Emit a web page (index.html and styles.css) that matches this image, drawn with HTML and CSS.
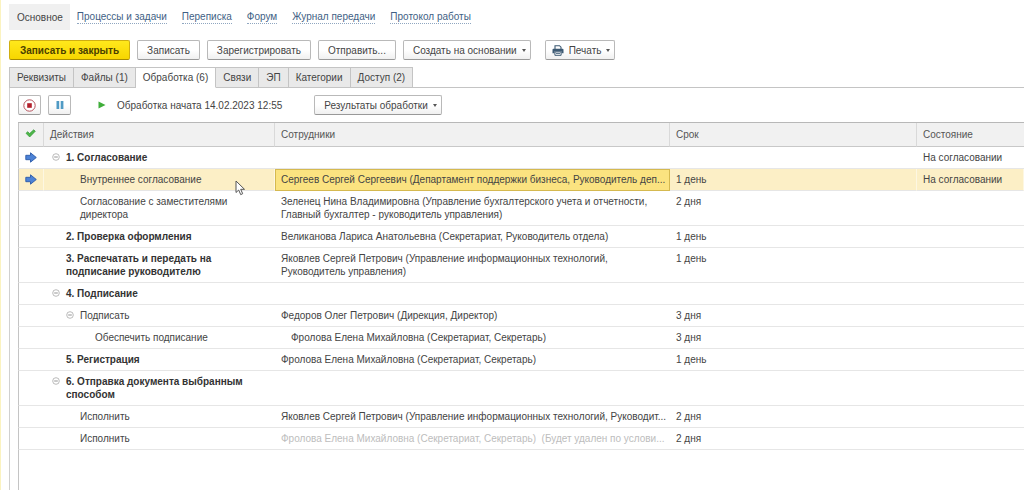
FILE: index.html
```
<!DOCTYPE html>
<html lang="ru">
<head>
<meta charset="utf-8">
<title>Обработка документа</title>
<link rel="stylesheet" href="styles.css">
</head>
<body>
<svg class="defs" aria-hidden="true">
  <symbol id="arrow" viewBox="0 0 12 11"><path d="M.8 3.3h4.700V.8L11.300 5.500 5.500 10.200V7.700H.8z" fill="#4c82d6" stroke="#2b5aa8" stroke-width=".9" stroke-linejoin="round"/></symbol>
  <symbol id="minus" viewBox="0 0 8 8"><circle cx="4" cy="4" r="3.300" fill="#fff" stroke="#aaa" stroke-width=".8"/><path d="M2.200 4h3.600" stroke="#888" stroke-width=".9"/></symbol>
</svg>
<main class="page">
  <nav class="nav">
    <span class="nav-current">Основное</span>
    <a href="#">Процессы и задачи</a>
    <a href="#">Переписка</a>
    <a href="#">Форум</a>
    <a href="#">Журнал передачи</a>
    <a href="#">Протокол работы</a>
  </nav>
  <div class="commands">
    <button class="btn btn-primary">Записать и закрыть</button>
    <button class="btn">Записать</button>
    <button class="btn">Зарегистрировать</button>
    <button class="btn">Отправить...</button>
    <button class="btn btn-menu">Создать на основании<span class="caret"></span></button>
    <button class="btn btn-print"><svg width="12" height="11" viewBox="0 0 12 11"><path d="M3 4V.7h4.500L9 2.200V4" fill="#fff" stroke="#3d5a73" stroke-width="1.100"/><path d="M1.500 3.700h9q1 0 1 1v3.600h-2V6.600h-7v1.700h-2V4.700q0-1 1-1z" fill="#3d5a73"/><path d="M2.900 6.900h6.200v3.400H2.900z" fill="#fff" stroke="#3d5a73"/><path d="M4 8.500h4" stroke="#3d5a73" stroke-width=".8"/></svg>Печать<span class="caret"></span></button>
  </div>
  <div class="tabs" role="tablist">
    <button class="tab" role="tab">Реквизиты</button>
    <button class="tab" role="tab">Файлы (1)</button>
    <button class="tab tab-active" role="tab" aria-selected="true">Обработка (6)</button>
    <button class="tab" role="tab">Связи</button>
    <button class="tab" role="tab">ЭП</button>
    <button class="tab" role="tab">Категории</button>
    <button class="tab" role="tab">Доступ (2)</button>
  </div>
  <section class="panel">
    <div class="toolbar">
      <button class="btn btn-icon" aria-label="Остановить"><svg width="13" height="13" viewBox="0 0 13 13"><circle cx="6.500" cy="6.500" r="5.700" fill="#fff" stroke="#b5525c" stroke-width="1"/><path d="M4.200 4.200h4.600v4.600H4.200z" fill="#b3202c"/></svg></button>
      <button class="btn btn-icon" aria-label="Приостановить"><svg width="8" height="8" viewBox="0 0 8 8"><path d="M.5 0h2.700v8H.5zM4.700 0h2.700v8H4.700z" fill="#4f9ac4"/></svg></button>
      <span class="status"><svg width="8" height="8" viewBox="0 0 8 8"><path d="M.5.5 7.500 4l-7 3.500z" fill="#3fae3a"/></svg>Обработка начата 14.02.2023 12:55</span>
      <button class="btn btn-menu">Результаты обработки<span class="caret"></span></button>
    </div>
    <table class="grid">
      <colgroup><col class="c-mark"><col class="c-action"><col class="c-staff"><col class="c-term"><col></colgroup>
      <thead>
        <tr><th class="mark"><svg width="11" height="9" viewBox="0 0 11 9"><path d="M1 4.300 2.800 2.700 4.600 4.600 8.700.8 10.300 2.200 4.700 8z" fill="#4fb748" stroke="#2f9638" stroke-width=".7" stroke-linejoin="round"/></svg></th><th>Действия</th><th>Сотрудники</th><th>Срок</th><th>Состояние</th></tr>
      </thead>
      <tbody>
        <tr><td class="mark"><svg width="12" height="11"><use href="#arrow"/></svg></td><td class="group"><svg class="fold" width="8" height="8"><use href="#minus"/></svg>1. Согласование</td><td></td><td></td><td>На согласовании</td></tr>
        <tr class="selected"><td class="mark"><svg width="12" height="11"><use href="#arrow"/></svg></td><td class="step">Внутреннее согласование</td><td class="line current">Сергеев Сергей Сергеевич (Департамент поддержки бизнеса, Руководитель деп...</td><td>1 день</td><td>На согласовании</td></tr>
        <tr><td></td><td class="step">Согласование с заместителями директора</td><td>Зеленец Нина Владимировна (Управление бухгалтерского учета и отчетности, Главный бухгалтер - руководитель управления)</td><td>2 дня</td><td></td></tr>
        <tr><td></td><td class="group">2. Проверка оформления</td><td>Великанова Лариса Анатольевна (Секретариат, Руководитель отдела)</td><td>1 день</td><td></td></tr>
        <tr><td></td><td class="group">3. Распечатать и передать на подписание руководителю</td><td class="wrap">Яковлев Сергей Петрович (Управление информационных технологий, Руководитель управления)</td><td>1 день</td><td></td></tr>
        <tr><td></td><td class="group"><svg class="fold" width="8" height="8"><use href="#minus"/></svg>4. Подписание</td><td></td><td></td><td></td></tr>
        <tr><td></td><td class="step"><svg class="fold" width="8" height="8"><use href="#minus"/></svg>Подписать</td><td>Федоров Олег Петрович (Дирекция, Директор)</td><td>3 дня</td><td></td></tr>
        <tr><td></td><td class="substep">Обеспечить подписание</td><td class="indent">Фролова Елена Михайловна (Секретариат, Секретарь)</td><td>3 дня</td><td></td></tr>
        <tr><td></td><td class="group">5. Регистрация</td><td>Фролова Елена Михайловна (Секретариат, Секретарь)</td><td>1 день</td><td></td></tr>
        <tr><td></td><td class="group"><svg class="fold" width="8" height="8"><use href="#minus"/></svg>6. Отправка документа выбранным способом</td><td></td><td></td><td></td></tr>
        <tr><td></td><td class="step">Исполнить</td><td class="line">Яковлев Сергей Петрович (Управление информационных технологий, Руководит...</td><td>2 дня</td><td></td></tr>
        <tr><td></td><td class="step">Исполнить</td><td class="line muted">Фролова Елена Михайловна (Секретариат, Секретарь)&nbsp; (Будет удален по услови...</td><td>2 дня</td><td></td></tr>
      </tbody>
    </table>
  </section>
</main>
<svg class="cursor" width="11" height="16" viewBox="0 0 11 16"><path d="M1 1v11.500l2.700-2.500 2 4.600 2-.9-2-4.400h3.800z" fill="#fff" stroke="#555" stroke-width="1" stroke-linejoin="round"/></svg>
</body>
</html>
```
FILE: styles.css
```
* { box-sizing: border-box; }
body {
  margin: 0;
  background: #fff;
  color: #444;
  font: 10px/13px "Liberation Sans", Arial, sans-serif;
}
.defs { position: absolute; width: 0; height: 0; }
.page {
  display: flex;
  flex-direction: column;
  min-height: 100vh;
  padding: 4px 0 0 8px;
  border-left: 1px solid #fbf3c0;
}
.nav { display: flex; align-items: center; gap: 15px; }
.nav-current { padding: 7px 7px 6px 8px; margin-right: -8px; background: #f0f0f0; }
.nav a {
  color: #3f5f85;
  text-decoration: none;
  border-bottom: 1px dotted #8fa6c0;
}
.commands { display: flex; gap: 7px; margin-top: 10px; }
.btn {
  display: flex;
  align-items: center;
  justify-content: center;
  height: 20px;
  padding: 0 9px;
  border: 1px solid #b9b9b9;
  border-bottom-color: #999;
  border-radius: 2px;
  background: linear-gradient(#fff 50%, #f0f0f0);
  color: #444;
  font: inherit;
  white-space: nowrap;
}
.btn-primary {
  padding: 0 10px;
  border-color: #cfae10;
  border-bottom-color: #a98c00;
  background: linear-gradient(#ffe81c, #f7d600);
  color: #4a4000;
  font-weight: bold;
}
.btn-menu, .btn-print { padding-right: 4px; }
.btn-print { gap: 5px; margin-left: 7px; padding-left: 6px; }
.caret {
  margin-left: 5px;
  border: 2px solid transparent;
  border-top: 3px solid #555;
  border-bottom: 0;
}
.btn-print .caret { margin-left: 0; }
.tabs { display: flex; margin-top: 7px; border-bottom: 1px solid #c4c4c4; }
.tab {
  height: 21px;
  margin-bottom: -1px;
  padding: 0 7px;
  border: 1px solid #c4c4c4;
  border-left-width: 0;
  background: #e9e9e9;
  color: #444;
  font: inherit;
}
.tab:first-child { border-left-width: 1px; }
.tab-active { background: #fff; border-bottom-color: #fff; }
.panel {
  display: flex;
  flex-direction: column;
  flex: 1;
  padding: 7px 0 0 8px;
  border-left: 1px solid #d0d0d0;
}
.toolbar { display: flex; align-items: center; gap: 7px; margin-bottom: 7px; }
.btn-icon { width: 23px; padding: 0; }
.status { display: flex; align-items: center; gap: 11px; margin: 0 25px 0 20px; }
.grid {
  width: 100%;
  table-layout: fixed;
  border-spacing: 0;
  border-top: 1px solid #b8b8b8;
}
.panel::after { content: ""; flex: 1; border-left: 1px solid #c4c4c4; }
.c-mark { width: 26px; }
.c-action { width: 231px; }
.c-staff { width: 395px; }
.c-term { width: 247px; }
.grid th, .grid td {
  padding: 4px 6px;
  border-bottom: 1px solid #e6e6e6;
  text-align: left;
  vertical-align: top;
}
.grid th {
  padding: 5px 6px;
  border-right: 1px solid #d9d9d9;
  border-bottom-color: #c8c8c8;
  background: #f1f1f1;
  color: #555;
  font-weight: normal;
}
.grid th:last-child { border-right: 0; }
.grid tr > :first-child { border-left: 1px solid #c4c4c4; }
.grid .mark { padding-left: 0; padding-right: 1px; text-align: center; }
.mark svg { display: block; margin: 1px auto 0; }
.grid .group { padding-left: 22px; padding-right: 20px; color: #333; font-weight: bold; }
.grid .step { padding-left: 36px; padding-right: 40px; }
.grid .substep { padding-left: 51px; }
.grid .indent { padding-left: 16px; }
.grid .wrap { padding-right: 20px; }
.fold { float: left; margin: 2px 0 0 -14px; }
.grid .line { padding-right: 0; white-space: nowrap; }
.grid .muted { color: #bdbdbd; }
.selected td { background: #fcefc6; border-right: 1px solid #fdf7e2; }
.grid .selected .current {
  background: #fbe380;
  outline: 1px solid #d5b950;
  outline-offset: -1px;
}
.cursor { position: absolute; left: 235px; top: 180px; }
```
